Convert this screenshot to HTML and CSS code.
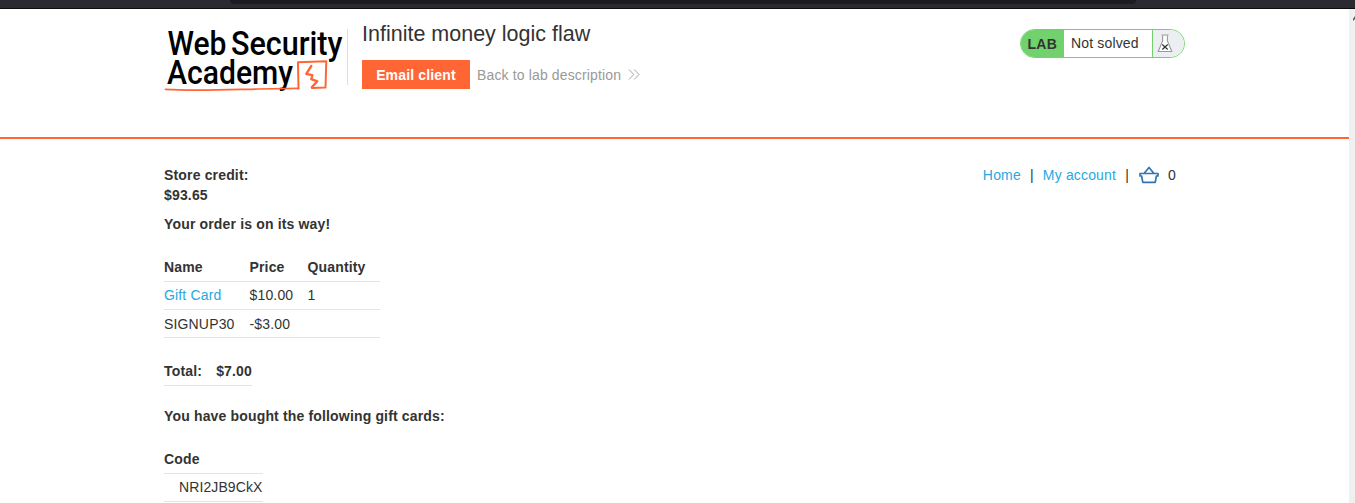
FILE: index.html
```html
<!DOCTYPE html>
<html lang="en">
<head>
<meta charset="utf-8">
<title>Infinite money logic flaw</title>
<link rel="stylesheet" href="styles.css">
</head>
<body>
<div class="chrome"><div class="chrome-field"></div></div>
<div class="viewport">
  <div class="page">
    <header class="lab-header">
      <div class="container header-row">
        <svg class="logo" width="184" height="70" viewBox="0 0 184 70">
          <g class="logo-text">
            <text x="3.5" y="30.7" textLength="59" lengthAdjust="spacingAndGlyphs">Web</text>
            <text x="67" y="30.7" textLength="111.5" lengthAdjust="spacingAndGlyphs">Security</text>
            <text x="3" y="60.2" textLength="126" lengthAdjust="spacingAndGlyphs">Academy</text>
          </g>
          <g fill="none" stroke="#ff6633" stroke-linejoin="round" stroke-linecap="round">
            <path stroke-width="1.7" d="M1.5 65.4C30 67 60 65.8 94 65L134.5 64.4"/>
            <path stroke-width="2" d="M134.5 64.4L134 38.3L162.3 37.3L161.5 63.5L148 64"/>
            <path stroke-width="2.4" d="M147.3 42L142.3 49.8L148.3 51.2L147.3 55.2L153.3 57.3L147.8 63.2"/>
          </g>
          <path class="logo-rule" d="M183.5 5V61"/>
        </svg>
        <div class="title-block">
          <h1>Infinite money logic flaw</h1>
          <div class="actions">
            <a class="button">Email client</a>
            <a class="back">Back to lab description</a>
            <svg class="chevrons" width="12" height="12" viewBox="0 0 12 12"><path d="M1 .5L5.8 5.5L1 10.5M6.2 .5L11 5.5L6.2 10.5" fill="none" stroke="#999" stroke-width=".9"/></svg>
          </div>
        </div>
        <div class="status">
          <strong>LAB</strong>
          <span class="state">Not solved</span>
          <span class="flask"><svg width="16" height="19" viewBox="0 0 16 19"><path d="M5.6 1.5V7L1.2 17.5H14.8L10.4 7V1.5" fill="#fff" stroke="#999" stroke-width="1.1"/><path d="M4.5 1H11.5" stroke="#999" stroke-width="1.2"/><path d="M5.3 10.5L10.7 15.5M10.7 10.5L5.3 15.5" stroke="#333" stroke-width="1.2"/></svg></span>
        </div>
      </div>
    </header>
    <main class="container">
      <div class="top-row">
        <div class="credit"><strong>Store credit:</strong><strong>$93.65</strong></div>
        <nav>
          <a class="home">Home</a><span class="bar">|</span><a class="account">My account</a><span class="bar">|</span>
          <svg class="basket" width="20" height="18" viewBox="0 0 20 18"><path d="M1 7.5H19V10H17.4L16.2 16.4H3.8L2.6 10H1ZM5 7.5L10 1.5L15 7.5" fill="none" stroke="#3274b5" stroke-width="1.7" stroke-linejoin="round"/></svg>
          <span>0</span>
        </nav>
      </div>
      <h4 class="way">Your order is on its way!</h4>
      <table class="items">
        <tr><th>Name</th><th>Price</th><th>Quantity</th></tr>
        <tr><td><a>Gift Card</a></td><td>$10.00</td><td>1</td></tr>
        <tr class="coupon"><td>SIGNUP30</td><td>-$3.00</td><td></td></tr>
      </table>
      <div class="total"><span>Total:</span><span>$7.00</span></div>
      <h4 class="bought">You have bought the following gift cards:</h4>
      <div class="codes"><div class="code-head">Code</div><div class="code">NRI2JB9CkX</div></div>
    </main>
  </div>
  <div class="scrollbar"><svg width="3" height="6" viewBox="0 0 3 6"><path d="M3 0V3L1 5V3Z" fill="#555"/></svg></div>
</div>
</body>
</html>
```
FILE: styles.css
```css
* { box-sizing: border-box; }
body { margin: 0; height: 503px; overflow: hidden; background: #fff; color: #333332; font: 14px/20px "Liberation Sans", Arial, sans-serif; letter-spacing: .16px; }
h1, h4 { margin: 0; }
a { color: #29a7df; }
.chrome { height: 9px; background: #2b2a33; border-bottom: 1px solid #0c0c0d; padding: 0 219px 0 230px; }
.chrome-field { height: 4px; background: #1c1b22; border-radius: 0 0 4px 4px; }
.viewport { display: flex; height: 494px; overflow: hidden; }
.page { width: 1349px; flex: none; }
.scrollbar { width: 6px; background: #f0f0f0; padding: 7px 0 0 3px; line-height: 0; }
.container { width: 1021px; margin-left: 164px; }
.lab-header { height: 130px; border-bottom: 2px solid #ff6633; }
.header-row { display: flex; align-items: flex-start; padding-top: 15px; }
.logo { flex: none; width: 184px; margin-right: 14px; overflow: visible; }
.logo-text { font: 500 33.5px Roboto, "Open Sans", sans-serif; letter-spacing: 0; fill: #000; }
.logo-rule { stroke: #ddd; }
.title-block { flex: 1; }
h1 { font-size: 21.5px; line-height: 24px; font-weight: 400; letter-spacing: 0; margin-top: -2px; }
.actions { display: flex; align-items: center; margin-top: 14px; height: 29px; }
.button { width: 108px; height: 29px; line-height: 30px; background: #ff6633; color: #fff; font-weight: 700; text-align: center; }
.back { color: #999; margin-left: 7px; line-height: 30px; letter-spacing: .14px; }
.chevrons { margin-left: 7px; }
.status { display: flex; width: 165px; height: 29px; margin-top: 5px; border: 1px solid #71d16c; border-radius: 15px; overflow: hidden; line-height: 27px; }
.status strong { width: 43px; padding-left: 6.5px; background: #71d16c; line-height: 29px; letter-spacing: .3px; }
.state { width: 88px; padding-left: 7px; }
.flask { flex: 1; border-left: 1px solid #71d16c; background: #ebeff2; padding: 4px 0 0 4px; line-height: 0; }
.top-row { display: flex; justify-content: space-between; padding-top: 26px; }
.credit { display: flex; flex-direction: column; }
nav { display: flex; height: 20px; padding-right: 9px; }
.bar { width: 22px; text-align: center; }
.basket { margin: 1px 9px 0 1px; }
.way { font-size: 14px; margin-top: 9px; }
.items { width: 216px; table-layout: fixed; border-collapse: collapse; margin-top: 19px; }
.items th, .items td { height: 28px; padding: 0; text-align: left; border-bottom: 1px solid #e4e4e4; line-height: 20px; }
.items .coupon td { padding-top: 1px; }
.items th:nth-child(1) { width: 85.5px; }
.items th:nth-child(2) { width: 58px; }
.total { display: flex; justify-content: space-between; width: 88px; height: 29px; margin-top: 19px; padding-top: 4px; border-bottom: 1px solid #e4e4e4; font-weight: 700; }
.bought { font-size: 14px; margin-top: 20px; }
.codes { width: 99px; margin-top: 19px; }
.code-head, .code { height: 28px; line-height: 27px; border-bottom: 1px solid #e4e4e4; }
.code-head { height: 29px; line-height: 28px; font-weight: 700; }
.code { padding-left: 15px; letter-spacing: .1px; }
```
